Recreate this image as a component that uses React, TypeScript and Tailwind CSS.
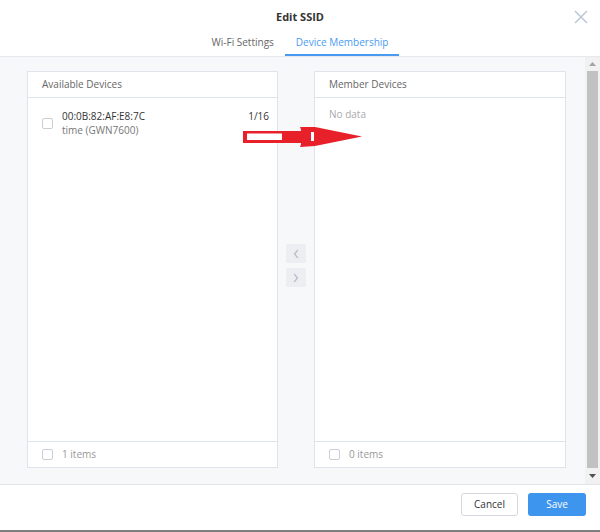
import React from 'react'

const Checkbox: React.FC = () => (
  <span className="inline-block w-[11px] h-[11px] rounded-[2px] border border-[#c9ced6] bg-white shrink-0" />
)

const Chevron: React.FC<{ dir: 'left' | 'right' }> = ({ dir }) => (
  <svg width="8" height="10" viewBox="0 0 8 10" fill="none">
    <path
      d={dir === 'left' ? 'M5.5 1.5L2.5 5L5.5 8.5' : 'M2.5 1.5L5.5 5L2.5 8.5'}
      stroke="#b7bec9"
      strokeWidth="1.2"
      strokeLinecap="round"
      strokeLinejoin="round"
    />
  </svg>
)

const RedArrow: React.FC = () => (
  <svg width="122" height="22" viewBox="0 0 122 22" fill="none">
    {/* shaft */}
    <rect x="0" y="5" width="60" height="12" fill="#e8202a" />
    <rect x="4" y="7.5" width="35" height="6.5" fill="#ffffff" />
    {/* head */}
    <path d="M57 1 C59 4 59 18 57 21 L72 20 L119 10.5 L72 1 Z" fill="#e8202a" />
    <rect x="68" y="6" width="3" height="9" fill="#ffffff" />
  </svg>
)

const Panel: React.FC<{ title: string; footer: string; children: React.ReactNode }> = ({
  title,
  footer,
  children,
}) => (
  <div className="flex flex-col bg-white border border-[#dfe3ea] h-full">
    <div className="h-[26px] shrink-0 border-b border-[#dfe3ea] flex items-center px-[14px] text-[10px] text-[#666]">
      {title}
    </div>
    <div className="flex-1">{children}</div>
    <div className="h-[26px] shrink-0 border-t border-[#dfe3ea] flex items-center gap-[9px] px-[14px] text-[10px] text-[#999]">
      <Checkbox />
      <span>{footer}</span>
    </div>
  </div>
)

export default function App() {
  return (
    <div
      className="relative w-[600px] h-[532px] flex flex-col bg-white overflow-hidden"
      style={{ fontFamily: '"Open Sans", "Noto Sans", sans-serif' }}
    >
      {/* header */}
      <div className="relative shrink-0 h-[57px] border-b border-[#e6e8ec] bg-white">
        <div className="pt-[9px] h-[25px] leading-[16px] text-center text-[11px] font-bold text-[#333]">
          Edit SSID
        </div>
        <div className="flex justify-center h-[31px] text-[10px]">
          <div className="px-[11px] pt-[9px] leading-[16px] text-[#666]">Wi-Fi Settings</div>
          <div className="px-[11px] pt-[9px] leading-[16px] text-[#4a9bf0] border-b-2 border-[#4a9bf0]">
            Device Membership
          </div>
        </div>
        <svg className="absolute left-[574px] top-[10px]" width="14" height="14" viewBox="0 0 14 14">
          <path d="M1 1L13 13M13 1L1 13" stroke="#bcc7d8" strokeWidth="1.5" />
        </svg>
      </div>

      {/* body */}
      <div className="flex-1 flex bg-[#f7f8fa] border-b border-[#e3e6eb]">
        <div className="flex-1 flex pl-[27px] pr-[19px] pt-[14px] pb-[16px]">
          <div className="w-[251px]">
            <Panel title="Available Devices" footer="1 items">
              <div className="flex items-center pl-[14px] pr-[8px] pt-[11px] text-[10px] leading-[14px]">
                <Checkbox />
                <div className="ml-[9px] flex-1">
                  <div className="text-[#333]">00:0B:82:AF:E8:7C</div>
                  <div className="text-[#777]">time (GWN7600)</div>
                </div>
                <div className="self-start text-[#333]">1/16</div>
              </div>
            </Panel>
          </div>
          <div className="w-[36px] flex flex-col items-center justify-center gap-[5px] pb-[8px]">
            <div className="w-[20px] h-[19px] rounded-[2px] bg-[#eceef2] flex items-center justify-center">
              <Chevron dir="left" />
            </div>
            <div className="w-[20px] h-[19px] rounded-[2px] bg-[#eceef2] flex items-center justify-center">
              <Chevron dir="right" />
            </div>
          </div>
          <div className="flex-1">
            <Panel title="Member Devices" footer="0 items">
              <div className="px-[14px] pt-[9px] text-[10px] leading-[14px] text-[#aaa]">No data</div>
            </Panel>
          </div>
        </div>
        {/* scrollbar */}
        <div className="w-[15px] bg-[#f1f1f1] flex flex-col items-center">
          <div className="h-[14px] flex items-center justify-center">
            <svg width="7" height="4" viewBox="0 0 7 4">
              <path d="M3.5 0L7 4H0Z" fill="#a3a3a3" />
            </svg>
          </div>
          <div className="flex-1 w-[11px] bg-[#c1c1c1]" />
          <div className="h-[16px] flex items-center justify-center">
            <svg width="7" height="4" viewBox="0 0 7 4">
              <path d="M0 0H7L3.5 4Z" fill="#505050" />
            </svg>
          </div>
        </div>
      </div>

      {/* footer */}
      <div className="shrink-0 h-[47px] bg-white border-b-2 border-[#7f7f7f] flex items-start justify-end gap-[10px] pt-[8px] pr-[14px]">
        <button className="w-[57px] h-[23px] rounded-[3px] border border-[#d4d8de] bg-white text-[10px] text-[#333]">
          Cancel
        </button>
        <button className="w-[58px] h-[23px] rounded-[3px] bg-[#3d95ee] text-[10px] text-white">
          Save
        </button>
      </div>

      <div className="absolute left-[243px] top-[126px]">
        <RedArrow />
      </div>
    </div>
  )
}
